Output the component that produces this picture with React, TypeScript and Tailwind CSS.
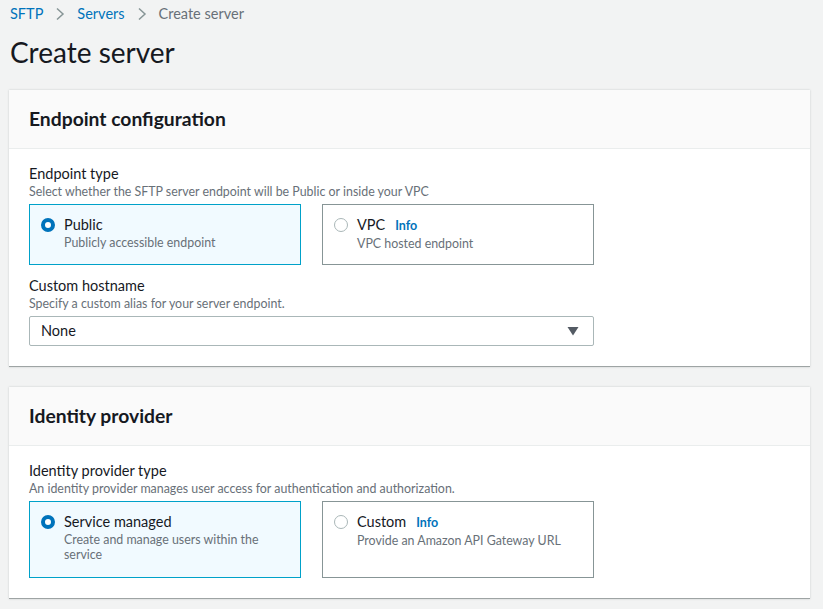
import React from 'react';

type Option = { title: string; desc: string; info?: boolean; selected?: boolean };

function Radio({ selected }: { selected?: boolean }) {
  if (selected) {
    return <span className="mt-[3px] block h-[14px] w-[14px] shrink-0 rounded-full border-[4px] border-[#0073bb] bg-white" />;
  }
  return <span className="mt-[3px] block h-[14px] w-[14px] shrink-0 rounded-full border border-[#aab7b8] bg-white" />;
}

function Tile({ opt, tall }: { opt: Option; tall?: boolean }) {
  const base = opt.selected
    ? 'border-[#00a1c9] bg-[#f1faff]'
    : 'border-[#879596] bg-white';
  return (
    <div className={`flex gap-[9px] border pl-[11px] pr-4 pt-[10px] ${base} ${tall ? 'h-[77px]' : 'h-[61px]'}`}>
      <Radio selected={opt.selected} />
      <div>
        <div className="flex items-baseline gap-[10px] text-[14.5px] leading-[20px] text-[#16191f]">
          {opt.title}
          {opt.info && <span className="text-[12.5px] font-bold text-[#0073bb]">Info</span>}
        </div>
        <div className="text-[12.4px] leading-[15px] text-[#687078]">{opt.desc}</div>
      </div>
    </div>
  );
}

function Field({ label, desc }: { label: string; desc: string }) {
  return (
    <div className="mb-[5px]">
      <div className="text-[14.5px] leading-[20px] text-[#16191f]">{label}</div>
      <div className="text-[12.4px] leading-[15px] text-[#687078]">{desc}</div>
    </div>
  );
}

function Card({ title, children }: { title: string; children: React.ReactNode }) {
  return (
    <div className="w-[801px] border-b border-[#9ea4a4] bg-white shadow-[0_0_2px_rgba(0,28,36,0.18)]">
      <div className="flex h-[59px] items-center border-b border-[#eaeded] bg-[#fafafa] px-5">
        <h2 className="text-[19.3px] font-bold text-[#16191f]">{title}</h2>
      </div>
      <div className="px-5 pb-5 pt-[15px]">{children}</div>
    </div>
  );
}

export default function App() {
  return (
    <div className="min-h-[609px] bg-[#f2f3f3] pl-[9px] pt-[4px] font-['Lato','Open_Sans',sans-serif] text-[#16191f]">
      <nav className="flex h-[20px] items-center pl-px text-[14.5px]">
        <span className="text-[#0073bb]">SFTP</span>
        <svg className="mx-[11px]" width="12" height="14" viewBox="0 0 12 14" fill="none">
          <path d="M3 1.5 L9 7 L3 12.5" stroke="#879596" strokeWidth="1.5" />
        </svg>
        <span className="text-[#0073bb]">Servers</span>
        <svg className="mx-[11px]" width="12" height="14" viewBox="0 0 12 14" fill="none">
          <path d="M3 1.5 L9 7 L3 12.5" stroke="#879596" strokeWidth="1.5" />
        </svg>
        <span className="text-[#687078]">Create server</span>
      </nav>
      <h1 className="mt-[11px] pl-px text-[28px] leading-[34px] font-normal text-[#16191f]">Create server</h1>

      <div className="mt-[21px] flex flex-col gap-[20px]">
        <Card title="Endpoint configuration">
          <Field label="Endpoint type" desc="Select whether the SFTP server endpoint will be Public or inside your VPC" />
          <div className="grid w-[565px] grid-cols-2 gap-[21px]">
            <Tile opt={{ title: 'Public', desc: 'Publicly accessible endpoint', selected: true }} />
            <Tile opt={{ title: 'VPC', desc: 'VPC hosted endpoint', info: true }} />
          </div>
          <div className="mt-[11px]">
            <Field label="Custom hostname" desc="Specify a custom alias for your server endpoint." />
            <div className="flex h-[30px] w-[565px] items-center justify-between rounded-[2px] border border-[#aab7b8] bg-white pl-[11px] pr-[14px] text-[14.5px]">
              <span>None</span>
              <svg width="12" height="10" viewBox="0 0 12 10">
                <path d="M0.5 1 H11.5 L6 9.5 Z" fill="#545b64" />
              </svg>
            </div>
          </div>
        </Card>

        <Card title="Identity provider">
          <Field label="Identity provider type" desc="An identity provider manages user access for authentication and authorization." />
          <div className="grid w-[565px] grid-cols-2 gap-[21px]">
            <Tile tall opt={{ title: 'Service managed', desc: 'Create and manage users within the service', selected: true }} />
            <Tile tall opt={{ title: 'Custom', desc: 'Provide an Amazon API Gateway URL', info: true }} />
          </div>
        </Card>
      </div>
    </div>
  );
}
